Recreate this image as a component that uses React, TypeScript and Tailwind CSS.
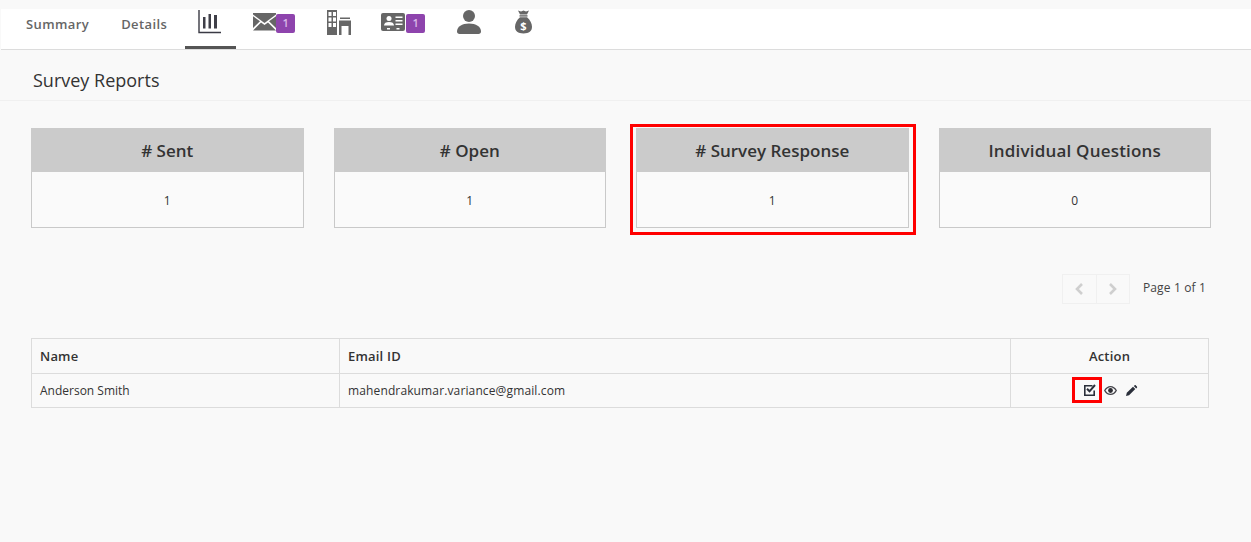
import React from "react";

function Badge() {
  return (
    <span className="flex h-[19px] w-[19px] items-center justify-center rounded-[2px] bg-[#8e44ad] text-[11px] tracking-normal text-[#d9b8e8]">1</span>
  );
}

function ChartIcon() {
  return (
    <svg width="24" height="24" viewBox="0 0 24 24" fill="none">
      <path d="M1 0V22.500H23" stroke="#3a3a44" strokeWidth="1.400" />
      <rect x="5" y="7" width="2.500" height="11.500" fill="#3f3f48" />
      <rect x="10.500" y="4" width="2.500" height="14.500" fill="#3f3f48" />
      <rect x="16" y="5" width="3" height="13.500" fill="#3f3f48" />
    </svg>
  );
}

function MailIcon() {
  return (
    <svg width="23" height="18" viewBox="0 0 23 18">
      <path d="M0 1.500 11.500 10 23 1.500V0H0Z" fill="#666" />
      <path d="M0 3.200V15L7 8.200Z M23 3.200V15L16 8.200Z" fill="#666" />
      <path d="M0 17.500H23L15 9.500 11.500 12 8 9.500Z" fill="#666" />
    </svg>
  );
}

function BuildingIcon() {
  return (
    <svg width="25" height="25" viewBox="0 0 25 25">
      <path fillRule="evenodd" d="M1 0h10v25H1ZM2.500 2v4h3V2Zm4.500 0v4h3V2ZM2.500 7.500v4h3v-4Zm4.500 0v4h3v-4ZM2.500 13v4h3v-4Zm4.500 0v4h3v-4Z" fill="#666" />
      <rect x="14" y="7.500" width="10" height="1.500" fill="#666" />
      <path fillRule="evenodd" d="M13 10.500h12V25h-2.500V16h-7v9H13Z" fill="#666" />
    </svg>
  );
}

function CardIcon() {
  return (
    <svg width="24" height="18" viewBox="0 0 24 18">
      <rect x="0" y="0" width="24" height="18" rx="2" fill="#666" />
      <circle cx="8" cy="5.500" r="2.500" fill="#fff" />
      <path d="M3 12.500c0-2.500 2-3.500 5-3.500s5 1 5 3.500Z" fill="#fff" />
      <rect x="14.500" y="3.500" width="7" height="1.500" fill="#fff" />
      <rect x="14.500" y="7" width="7" height="1.500" fill="#fff" />
      <rect x="14.500" y="10.500" width="7" height="1.500" fill="#fff" />
      <rect x="6" y="15" width="3" height="1.500" fill="#fff" />
      <rect x="15.500" y="15" width="3" height="1.500" fill="#fff" />
    </svg>
  );
}

function UserIcon() {
  return (
    <svg width="24" height="24" viewBox="0 0 24 24">
      <circle cx="12" cy="6" r="6" fill="#666" />
      <path d="M0 21.500c0-5 5-8 12-8s12 3 12 8c0 1.500-1 2.500-2.500 2.500h-19C1 24 0 23 0 21.500Z" fill="#666" />
    </svg>
  );
}

function BagIcon() {
  return (
    <svg width="17" height="24" viewBox="0 0 17 24">
      <path d="M3 .5 6 1.500 8.500.5 11 1.500 14 .5 12 4.500H5Z" fill="#666" />
      <rect x="4.500" y="5.200" width="8" height="1.400" fill="#666" />
      <path d="M5 7.300h7c3 2.500 5 6 5 9.500 0 4.500-3 6.700-8.500 6.700S0 21.300 0 16.800c0-3.500 2-7 5-9.500Z" fill="#666" />
      <text x="8.500" y="20" textAnchor="middle" fontSize="11" fontWeight="700" fill="#fff" fontFamily="Open Sans, sans-serif">$</text>
    </svg>
  );
}

function SquareCheck() {
  return (
    <svg width="12" height="12" viewBox="0 0 12 12" fill="none">
      <path d="M10.200 6.500V11.200H.800V1.800H8.500" stroke="#2a2f3a" strokeWidth="1.600" />
      <path d="M3 4.800 5.500 7.300 11 1" stroke="#2a2f3a" strokeWidth="2" />
    </svg>
  );
}

function Eye() {
  return (
    <svg width="13" height="9" viewBox="0 0 13 9">
      <path fillRule="evenodd" d="M0 4.500C1.500 1.500 4 0 6.500 0S11.500 1.500 13 4.500C11.500 7.500 9 9 6.500 9S1.500 7.500 0 4.500ZM1.500 4.500C2.700 6.500 4.500 7.800 6.500 7.800S10.300 6.500 11.500 4.500C10.300 2.500 8.500 1.200 6.500 1.200S2.700 2.500 1.500 4.500Z" fill="#44444a" />
      <circle cx="6.500" cy="4.500" r="2.400" fill="#2d2d33" />
    </svg>
  );
}

function Pencil() {
  return (
    <svg width="12" height="11" viewBox="0 0 12 11">
      <path d="M0 11 .8 7.800 7 1.800 9.300 4.100 3.100 10.200Z" fill="#2a2f3a" />
      <path d="M7.800 1 8.500.4c.4-.4 1-.4 1.400 0l1 1c.4.400.4 1 0 1.400l-.7.600Z" fill="#2a2f3a" />
    </svg>
  );
}

function Card({ title, value, mark, wide }: { title: string; value: string; mark?: boolean; wide?: boolean }) {
  return (
    <div className="relative">
      <div className="flex h-[100px] flex-col border border-[#c9c9c9] bg-[#fafafa]">
        <div className={`-mx-px -mt-px flex h-[44px] items-center justify-center bg-[#cbcbcb] pt-[2px] text-[17px] font-semibold text-[#333] ${wide ? "tracking-[0.2px]" : ""}`}>
          {title}
        </div>
        <div className="flex flex-1 items-center justify-center pt-[2px] text-[12px] text-[#333]">{value}</div>
      </div>
      {mark && <div className="absolute -bottom-[7px] -left-[6px] -right-[7px] -top-[4px] border-[3px] border-[#ff0000]" />}
    </div>
  );
}

export default function App() {
  return (
    <div className="min-h-[542px] bg-[#f9f9f9] pt-[9px] text-[#333]" style={{ fontFamily: '"Open Sans", sans-serif' }}>
      <nav className="ml-px flex h-[41px] items-start border-b border-[#dcdcdc] bg-white text-[13px] font-semibold tracking-[0.4px] text-[#666]">
        <span className="ml-[25px] mt-[6px]">Summary</span>
        <span className="ml-[32px] mt-[6px]">Details</span>
        <span className="ml-[18px] h-[40px] w-[51px] border-b-[3px] border-[#555] pl-[13px] pt-px"><ChartIcon /></span>
        <span className="ml-[17px] mt-[4px] flex items-start">
          <MailIcon />
          <span className="mt-px"><Badge /></span>
        </span>
        <span className="ml-[31px] mt-px"><BuildingIcon /></span>
        <span className="ml-[30px] mt-[4px] flex items-start">
          <CardIcon />
          <span className="ml-px mt-px"><Badge /></span>
        </span>
        <span className="ml-[32px] mt-px"><UserIcon /></span>
        <span className="ml-[34px] mt-px"><BagIcon /></span>
      </nav>

      <div className="flex h-[51px] items-center border-b border-[#f0f0f0] pl-[33px] pt-[10px] text-[18px] text-[#333]">Survey Reports</div>

      <div className="ml-[31px] mr-[40px] mt-[27px] grid grid-cols-4 gap-[30px]">
        <Card title="# Sent" value="1" />
        <Card title="# Open" value="1" />
        <Card title="# Survey Response" value="1" mark />
        <Card title="Individual Questions" value="0" wide />
      </div>

      <div className="mr-[45px] mt-[46px] flex items-center justify-end">
        <div className="flex h-[30px] border border-[#f0f0f0] text-[#cfcfcf]">
          <span className="flex w-[34px] items-center justify-center border-r border-[#f0f0f0]">
            <svg width="10" height="14" viewBox="0 0 10 14" fill="none"><path d="M8 2 3 7l5 5" stroke="currentColor" strokeWidth="2.600" /></svg>
          </span>
          <span className="flex w-[32px] items-center justify-center">
            <svg width="10" height="14" viewBox="0 0 10 14" fill="none"><path d="M2 2l5 5-5 5" stroke="currentColor" strokeWidth="2.600" /></svg>
          </span>
        </div>
        <span className="mb-[2px] ml-[13px] text-[12px] tracking-[0.15px] text-[#444]">Page 1 of 1</span>
      </div>

      <table className="ml-[31px] mt-[34px] w-[1178px] table-fixed border-collapse text-[12px] text-[#333]">
        <colgroup>
          <col className="w-[308px]" />
          <col className="w-[671px]" />
          <col />
        </colgroup>
        <thead>
          <tr className="h-[35px] text-[13px] font-semibold tracking-[0.2px]">
            <th className="border border-[#dcdcdc] pl-2 pt-[2px] text-left font-semibold">Name</th>
            <th className="border border-[#dcdcdc] pl-2 pt-[2px] text-left font-semibold">Email ID</th>
            <th className="border border-[#dcdcdc] pt-[2px] text-center font-semibold">Action</th>
          </tr>
        </thead>
        <tbody>
          <tr className="h-[34px]">
            <td className="border border-[#dcdcdc] pl-2">Anderson Smith</td>
            <td className="border border-[#dcdcdc] pl-2 tracking-[0.13px]">mahendrakumar.variance@gmail.com</td>
            <td className="border border-[#dcdcdc]">
              <div className="flex items-center justify-center gap-[8px] pb-px pl-[3px]">
                <span className="relative flex">
                  <SquareCheck />
                  <span className="absolute -bottom-[7px] -left-[12px] -right-[6px] -top-[7px] border-[3px] border-[#ff0000]" />
                </span>
                <span className="mt-px flex"><Eye /></span>
                <span className="ml-px flex"><Pencil /></span>
              </div>
            </td>
          </tr>
        </tbody>
      </table>
    </div>
  );
}
